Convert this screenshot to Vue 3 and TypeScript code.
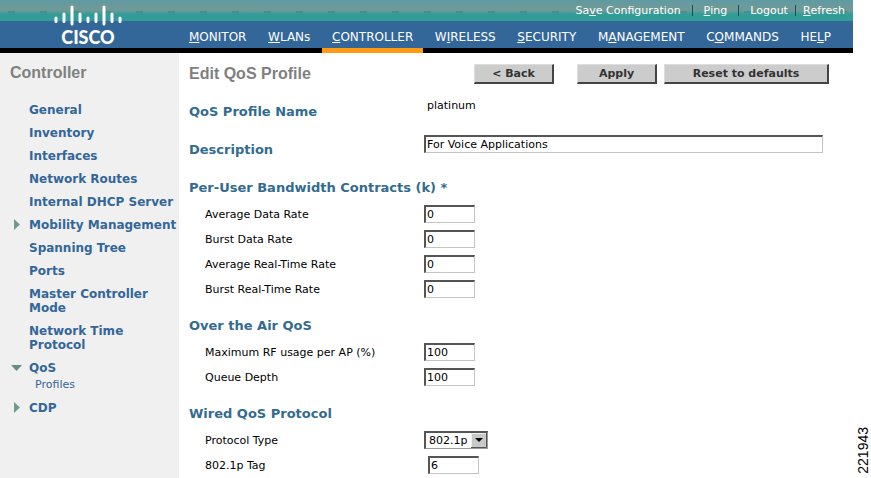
<script setup lang="ts">
import { ref } from 'vue'

interface Shortcut {
  before: string
  key: string
  after: string
}

interface NavItem extends Shortcut {
  active?: boolean
}

interface SideItem {
  label: string
  marker?: 'closed' | 'open'
  children?: string[]
}

interface Field {
  id: string
  label: string
  value: string
}

const shortcuts: Shortcut[] = [
  { before: 'Sa', key: 'v', after: 'e Configuration' },
  { before: '', key: 'P', after: 'ing' },
  { before: 'Lo', key: 'g', after: 'out' },
  { before: '', key: 'R', after: 'efresh' },
]

const nav: NavItem[] = [
  { before: '', key: 'M', after: 'ONITOR' },
  { before: '', key: 'W', after: 'LANs' },
  { before: '', key: 'C', after: 'ONTROLLER', active: true },
  { before: 'W', key: 'I', after: 'RELESS' },
  { before: '', key: 'S', after: 'ECURITY' },
  { before: 'M', key: 'A', after: 'NAGEMENT' },
  { before: 'C', key: 'O', after: 'MMANDS' },
  { before: 'HE', key: 'L', after: 'P' },
]

const side: SideItem[] = [
  { label: 'General' },
  { label: 'Inventory' },
  { label: 'Interfaces' },
  { label: 'Network Routes' },
  { label: 'Internal DHCP Server' },
  { label: 'Mobility Management', marker: 'closed' },
  { label: 'Spanning Tree' },
  { label: 'Ports' },
  { label: 'Master Controller Mode' },
  { label: 'Network Time Protocol' },
  { label: 'QoS', marker: 'open', children: ['Profiles'] },
  { label: 'CDP', marker: 'closed' },
]

const description = ref('For Voice Applications')
const protocol = ref('802.1p')
const tag = ref('6')

const bandwidth = ref<Field[]>([
  { id: 'avg-data', label: 'Average Data Rate', value: '0' },
  { id: 'burst-data', label: 'Burst Data Rate', value: '0' },
  { id: 'avg-rt', label: 'Average Real-Time Rate', value: '0' },
  { id: 'burst-rt', label: 'Burst Real-Time Rate', value: '0' },
])

const air = ref<Field[]>([
  { id: 'rf-usage', label: 'Maximum RF usage per AP (%)', value: '100' },
  { id: 'queue-depth', label: 'Queue Depth', value: '100' },
])
</script>

<template>
  <div class="page">
    <div class="app">
      <header class="banner">
        <div class="brand">
          <svg class="bars" width="68" height="22" viewBox="0 0 68 22" aria-hidden="true">
            <g stroke="#fff" stroke-width="3" stroke-linecap="round">
              <path d="M2 14v3.500M10 10v7.500M26 10v7.500M34 14v3.500M42 10v7.500M58 10v7.500M66 14v3.500" />
              <path d="M18 3v17M50 3v17" />
            </g>
          </svg>
          <span class="wordmark">CISCO</span>
        </div>
        <div class="menus">
          <div class="utility">
            <a v-for="s in shortcuts" :key="s.after" href="#">{{ s.before }}<u>{{ s.key }}</u>{{ s.after }}</a>
          </div>
          <nav class="nav">
            <a v-for="n in nav" :key="n.after" href="#" :class="{ active: n.active }">{{ n.before }}<u>{{ n.key }}</u>{{ n.after }}</a>
          </nav>
        </div>
      </header>

      <div class="body">
        <aside class="side">
          <h2>Controller</h2>
          <ul>
            <li v-for="item in side" :key="item.label">
              <svg v-if="item.marker" class="marker" width="12" height="14" viewBox="0 0 12 14" aria-hidden="true">
                <path v-if="item.marker === 'closed'" d="M4 1l6 5.500-6 5.500z" fill="#6f9a8f" />
                <path v-else d="M1 4h11l-5.500 6z" fill="#5f9080" />
              </svg>
              <span v-else class="marker"></span>
              <div class="entry">
                <a href="#">{{ item.label }}</a>
                <a v-for="child in item.children" :key="child" class="child" href="#">{{ child }}</a>
              </div>
            </li>
          </ul>
        </aside>

        <main class="main">
          <div class="titlebar">
            <h1>Edit QoS Profile</h1>
            <div class="actions">
              <button type="button" class="back">&lt; Back</button>
              <button type="button" class="apply">Apply</button>
              <button type="button" class="reset">Reset to defaults</button>
            </div>
          </div>

          <form @submit.prevent>
            <div class="row major">
              <span class="head">QoS Profile Name</span>
              <output class="plain">platinum</output>
            </div>
            <div class="row major">
              <label class="head" for="description">Description</label>
              <input id="description" v-model="description" class="box wide" type="text" />
            </div>

            <section>
              <h3 class="head">Per-User Bandwidth Contracts (k) *</h3>
              <div v-for="f in bandwidth" :key="f.id" class="row">
                <label :for="f.id">{{ f.label }}</label>
                <input :id="f.id" v-model="f.value" class="box" type="text" />
              </div>
            </section>

            <section>
              <h3 class="head">Over the Air QoS</h3>
              <div v-for="f in air" :key="f.id" class="row">
                <label :for="f.id">{{ f.label }}</label>
                <input :id="f.id" v-model="f.value" class="box" type="text" />
              </div>
            </section>

            <section>
              <h3 class="head">Wired QoS Protocol</h3>
              <div class="row">
                <label for="protocol">Protocol Type</label>
                <div class="picker">
                  <select id="protocol" v-model="protocol">
                    <option>802.1p</option>
                    <option>None</option>
                  </select>
                  <svg class="arrow" width="16" height="15" viewBox="0 0 16 15" aria-hidden="true">
                    <path d="M0 0h16v15H0z" fill="#c8c8c8" />
                    <path d="M0.500 14.500V0.500h15" fill="none" stroke="#eee" />
                    <path d="M0 14.500h15.500V0" fill="none" stroke="#555" />
                    <path d="M4 5h8l-4 4z" fill="#000" />
                  </svg>
                </div>
              </div>
              <div class="row">
                <label for="tag">802.1p Tag</label>
                <input id="tag" v-model="tag" class="box indented" type="text" />
              </div>
            </section>
          </form>
        </main>
      </div>
    </div>
    <div class="margin"><span class="figure">221943</span></div>
  </div>
</template>

<style>
body {
  margin: 0;
  background: #fff;
}
</style>

<style scoped>
.page {
  display: flex;
  min-height: 100vh;
  font: 11px/14px "DejaVu Sans", Verdana, sans-serif;
  color: #000;
}
.app {
  flex: 1;
  min-width: 0;
  display: flex;
  flex-direction: column;
}
a {
  color: inherit;
  text-decoration: none;
}
.banner {
  display: flex;
  color: #fff;
  border-bottom: 5px solid #000;
  background:
    repeating-linear-gradient(90deg, transparent 0 8px, #4c8d8a 8px 15px, transparent 15px 32px) 0 11px / 100% 2px no-repeat,
    linear-gradient(#5d9aa6 0, #6c9a98 6px, #6c9a98 11px, #319c98 14px, #319c98 21px, #336699 21px);
}
.brand {
  flex: 0 0 179px;
  box-sizing: border-box;
  padding: 4px 0 0 54px;
  display: flex;
  flex-direction: column;
}
.bars {
  display: block;
}
.wordmark {
  width: 68px;
  text-align: center;
  font: 900 18px/22px Lato, "Open Sans", sans-serif;
}
.menus {
  flex: 1;
  min-width: 0;
}
.utility {
  display: flex;
  justify-content: flex-end;
  height: 21px;
  padding-right: 8px;
  line-height: 20px;
}
.utility a {
  display: flex;
  align-items: center;
}
.utility a + a::before {
  content: "";
  height: 11px;
  border-left: 1px solid #17504f;
  margin: 0 11px;
}
.utility a:last-child::before {
  margin: 0 7px;
}
.nav {
  display: flex;
  justify-content: space-between;
  padding-right: 12px;
  font-size: 12px;
  height: 27px;
}
.nav a {
  padding: 5px 10px 0;
  line-height: 22px;
}
.nav a.active {
  margin-bottom: -5px;
  border-bottom: 5px solid #ff9912;
}
.body {
  flex: 1;
  display: flex;
}
.side {
  flex: 0 0 179px;
  box-sizing: border-box;
  background: #f0f0f0;
  padding: 10px 0 0 10px;
}
h1,
h2 {
  margin: 0;
  font: bold 16px/20px "Liberation Sans", Arial, sans-serif;
  color: #808080;
}
ul {
  list-style: none;
  margin: 20px 0 0;
  padding: 0;
  display: flex;
  flex-direction: column;
  gap: 9px;
}
li {
  display: flex;
  gap: 7px;
}
.marker {
  flex: 0 0 12px;
}
.entry {
  flex: 1;
  display: flex;
  flex-direction: column;
  font-size: 12px;
  font-weight: bold;
  color: #336699;
}
.entry .child {
  font-size: 11px;
  font-weight: normal;
  padding: 3px 0 0 6px;
}
.main {
  flex: 1;
  min-width: 0;
  padding: 11px 24px 0 10px;
}
.titlebar {
  display: flex;
  justify-content: space-between;
  align-items: center;
}
.actions {
  display: flex;
}
button {
  width: 80px;
  height: 20px;
  padding: 0;
  font: bold 11px/16px "DejaVu Sans", Verdana, sans-serif;
  color: #333;
  background: #ccc;
  border: 1px solid #ddd;
  border-right: 2px solid #444;
  border-bottom: 2px solid #444;
}
.apply {
  margin: 0 7px 0 23px;
}
.reset {
  width: 165px;
}
form {
  padding-top: 8px;
}
.head {
  margin: 0;
  font-size: 13px;
  line-height: 16px;
  font-weight: bold;
  color: #336b90;
}
.row {
  display: grid;
  grid-template-columns: 219px 1fr;
  align-items: center;
  height: 18px;
  margin: 7px 0 0 16px;
}
.row label {
  padding-top: 2px;
}
.row.major {
  margin: 0 0 20px;
  grid-template-columns: 235px 1fr;
}
.row.major .head {
  padding-top: 12px;
}
.plain {
  padding-left: 3px;
}
section {
  padding-top: 20px;
}
.row.major + section {
  padding-top: 12px;
}
section .head + .row {
  margin-top: 9px;
}
.box {
  box-sizing: border-box;
  width: 51px;
  height: 18px;
  padding: 0 1px;
  font: inherit;
  color: #000;
  background: #fff;
  border: 1px solid #c4c4c4;
  border-top: 2px solid #555;
  border-left: 2px solid #555;
  border-radius: 0;
  outline: 0;
}
.box.wide {
  width: auto;
  margin-right: 6px;
}
.box.indented {
  margin-left: 4px;
}
.picker {
  position: relative;
  width: 64px;
  height: 18px;
}
select {
  appearance: none;
  box-sizing: border-box;
  width: 100%;
  height: 18px;
  padding: 0 18px 0 3px;
  font: inherit;
  color: #000;
  background: #fff;
  border: 1px solid #999;
  border-top: 2px solid #555;
  border-left: 2px solid #555;
  border-radius: 0;
}
.arrow {
  position: absolute;
  right: 1px;
  top: 2px;
  pointer-events: none;
}
.margin {
  flex: 0 0 18px;
  display: flex;
  align-items: flex-end;
  justify-content: flex-end;
}
.figure {
  writing-mode: vertical-rl;
  transform: rotate(180deg);
  font: 14px/16px "Liberation Sans", Arial, sans-serif;
  padding-top: 4px;
}
</style>
